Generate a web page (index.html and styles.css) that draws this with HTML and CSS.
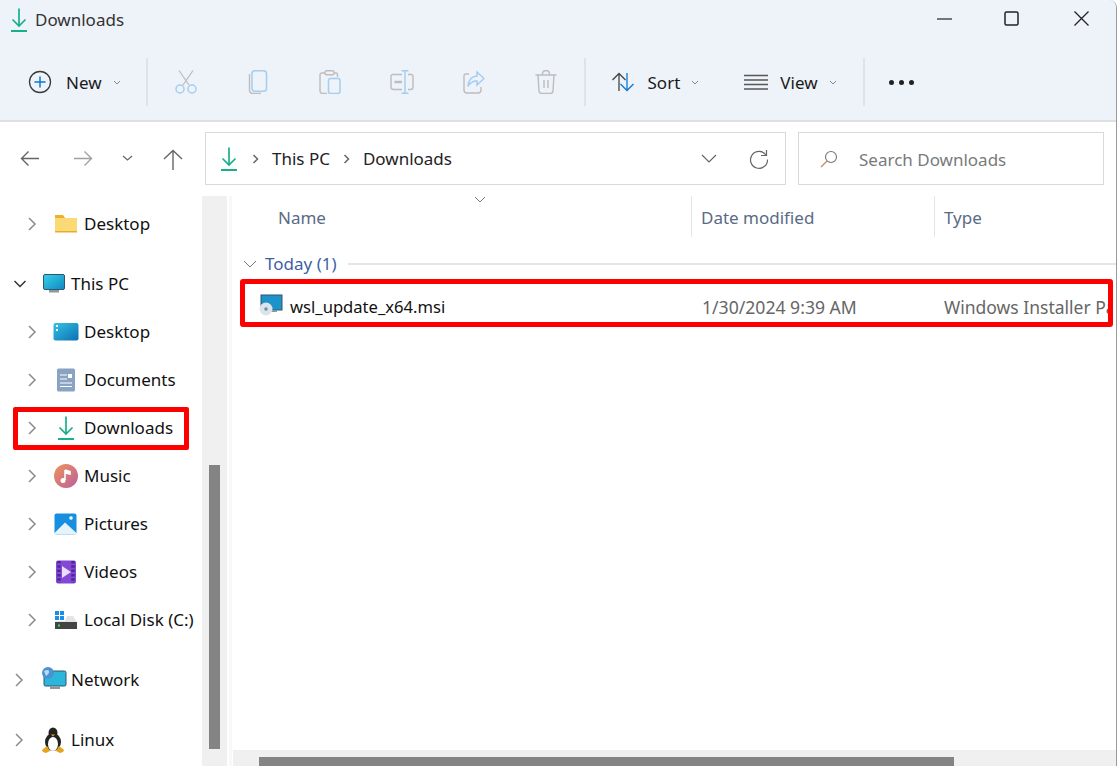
FILE: index.html
```html
<!DOCTYPE html>
<html lang="en">
<head>
<meta charset="utf-8">
<title>Downloads</title>
<link rel="stylesheet" href="styles.css">
</head>
<body>
<svg class="defs" width="0" height="0">
  <symbol id="dl" viewBox="0 0 16 24">
    <path d="M8 0.500V18M1.500 11.500L8 18L14.500 11.500" fill="none" stroke="#17b08c" stroke-width="1.700"/>
    <path d="M0 23H16" stroke="#17b08c" stroke-width="2"/>
  </symbol>
  <symbol id="chev-r" viewBox="0 0 10 16"><path d="M2 2L8 8L2 14" fill="none" stroke="#8c8c8c" stroke-width="1.5"/></symbol>
</svg>
<div class="window">
  <header class="top">
    <div class="titlebar">
      <div class="title"><svg class="ti-icon"><use href="#dl"/></svg><span>Downloads</span></div>
      <div class="winbtns">
        <svg class="w-min" width="15" height="15" viewBox="0 0 15 15"><path d="M0 8H15" stroke="#222" stroke-width="1.2"/></svg>
        <svg width="15" height="15" viewBox="0 0 15 15"><rect x="1" y="1" width="13" height="13" rx="1.500" fill="none" stroke="#222" stroke-width="1.500"/></svg>
        <svg width="15" height="15" viewBox="0 0 15 15"><path d="M0.500 0.500L14.500 14.500M14.500 0.500L0.500 14.500" stroke="#222" stroke-width="1.300"/></svg>
      </div>
    </div>
    <div class="toolbar">
      <div class="tool new">
        <svg width="24" height="24" viewBox="0 0 24 24"><circle cx="12" cy="12" r="10.500" fill="none" stroke="#3a3a3a" stroke-width="1.300"/><path d="M12 6.500V17.500M6.500 12H17.500" stroke="#0a78d4" stroke-width="1.500"/></svg>
        <span class="new-l">New</span>
        <svg class="caret" width="8" height="5" viewBox="0 0 8 5"><path d="M1 1L4 4L7 1" fill="none" stroke="#888" stroke-width="1"/></svg>
      </div>
      <i class="sep s1"></i>
      <div class="dim">
        <svg width="22" height="24" viewBox="0 0 22 24"><path d="M4 0.500L14 15M18 0.500L8 15" fill="none" stroke="#bdbdbd" stroke-width="1.300"/><circle cx="5" cy="19" r="4" fill="none" stroke="#a5cdf0" stroke-width="1.500"/><circle cx="17" cy="19" r="4" fill="none" stroke="#a5cdf0" stroke-width="1.500"/></svg>
        <svg width="20" height="24" viewBox="0 0 20 24"><path d="M1.500 4V20Q1.500 23.500 5 23.500H13" fill="none" stroke="#bdbdbd" stroke-width="1.400"/><rect x="4" y="0.800" width="14.500" height="20.500" rx="3" fill="none" stroke="#a5cdf0" stroke-width="1.500"/></svg>
        <svg width="22" height="24" viewBox="0 0 22 24"><path d="M6 3H3Q1 3 1 5V21Q1 23.500 4 23.500H8M15 3H17Q18.500 3 18.500 5V7" fill="none" stroke="#bdbdbd" stroke-width="1.400"/><rect x="6" y="0.800" width="9" height="4" rx="1.500" fill="none" stroke="#bdbdbd" stroke-width="1.400"/><rect x="9.500" y="8.500" width="11.500" height="15" rx="2" fill="none" stroke="#a5cdf0" stroke-width="1.500"/></svg>
        <svg width="24" height="24" viewBox="0 0 24 24"><path d="M12 4.500H3Q1 4.500 1 6.500V17Q1 19.500 3.500 19.500H12M18 4.500H21Q23 4.500 23 6.500V17Q23 19.500 20.500 19.500H18" fill="none" stroke="#bdbdbd" stroke-width="1.400"/><path d="M4.500 12H12" stroke="#bdbdbd" stroke-width="2.400"/><path d="M11.500 0.800H18.500M15 0.800V23.200M11.500 23.200H18.500" fill="none" stroke="#a5cdf0" stroke-width="1.400"/></svg>
        <svg width="22" height="24" viewBox="0 0 22 24"><path d="M6 4H3Q1 4 1 6V20Q1 23 4 23H15Q18 23 18 20V17" fill="none" stroke="#bdbdbd" stroke-width="1.400"/><path d="M14 2L21 8.500L14 15V11Q8 11 5 16.500Q5.500 6.500 14 6Z" fill="none" stroke="#a5cdf0" stroke-width="1.500"/></svg>
        <svg width="22" height="24" viewBox="0 0 22 24"><path d="M0.500 5H21.500M7.500 4.500Q7.500 0.800 10 0.800H12Q14.500 0.800 14.500 4.500M3 5L4 21Q4 23.500 7 23.500H15Q18 23.500 18 21L19 5M9 10V18M13 10V18" fill="none" stroke="#bdbdbd" stroke-width="1.400"/></svg>
      </div>
      <i class="sep s2"></i>
      <div class="tool sort">
        <svg width="24" height="20" viewBox="0 0 24 20"><path d="M8 19V2M1.500 8L8 1.500L14.500 8" fill="none" stroke="#444" stroke-width="1.300"/><path d="M16 1V18.500M9.500 12L16 18.500L22.500 12" fill="none" stroke="#0a78d4" stroke-width="1.300"/></svg>
        <span>Sort</span>
        <svg class="caret" width="8" height="5" viewBox="0 0 8 5"><path d="M1 1L4 4L7 1" fill="none" stroke="#888" stroke-width="1"/></svg>
      </div>
      <div class="tool view">
        <svg width="24" height="17" viewBox="0 0 24 17"><path d="M0 1.500H24M0 6H24M0 10.500H24M0 15H24" stroke="#555" stroke-width="1.300"/></svg>
        <span>View</span>
        <svg class="caret" width="8" height="5" viewBox="0 0 8 5"><path d="M1 1L4 4L7 1" fill="none" stroke="#888" stroke-width="1"/></svg>
      </div>
      <i class="sep s3"></i>
      <div class="more"><b></b><b></b><b></b></div>
    </div>
  </header>

  <div class="navrow">
    <div class="navbtns">
      <svg class="n-back" width="19" height="17" viewBox="0 0 19 17"><path d="M19 8.500H1.500M8.500 1.500L1.500 8.500L8.500 15.500" fill="none" stroke="#666" stroke-width="1.400"/></svg>
      <svg class="n-fwd" width="19" height="17" viewBox="0 0 19 17"><path d="M0 8.500H17.500M10.500 1.500L17.500 8.500L10.500 15.500" fill="none" stroke="#a0a0a0" stroke-width="1.400"/></svg>
      <svg class="n-down" width="11" height="6" viewBox="0 0 11 6"><path d="M1 1L5.500 5L10 1" fill="none" stroke="#666" stroke-width="1.200"/></svg>
      <svg class="n-up" width="20" height="21" viewBox="0 0 20 21"><path d="M10 21V1.500M1 10L10 1.500L19 10" fill="none" stroke="#666" stroke-width="1.400"/></svg>
    </div>
    <div class="address">
      <svg class="addr-icon"><use href="#dl"/></svg>
      <svg class="crumb-c" width="7" height="10" viewBox="0 0 7 10"><path d="M1.500 1L5.500 5L1.500 9" fill="none" stroke="#666" stroke-width="1.500"/></svg>
      <span>This PC</span>
      <svg class="crumb-c" width="7" height="10" viewBox="0 0 7 10"><path d="M1.500 1L5.500 5L1.500 9" fill="none" stroke="#666" stroke-width="1.500"/></svg>
      <span>Downloads</span>
      <svg class="addr-drop" width="16" height="10" viewBox="0 0 16 10"><path d="M1 1L8 8L15 1" fill="none" stroke="#666" stroke-width="1.200"/></svg>
      <svg class="addr-ref" width="20" height="20" viewBox="0 0 20 20"><path d="M17 6A8.500 8.500 0 1 0 18.500 10.500" fill="none" stroke="#666" stroke-width="1.200"/><path d="M17.500 1V6.500H12" fill="none" stroke="#666" stroke-width="1.200"/></svg>
    </div>
    <div class="search">
      <svg width="18" height="18" viewBox="0 0 18 18"><circle cx="11" cy="7" r="5.500" fill="none" stroke="#777" stroke-width="1.100"/><path d="M7 11L1 17" stroke="#c98a5e" stroke-width="1.200"/></svg>
      <span>Search Downloads</span>
    </div>
  </div>

  <div class="body">
    <nav class="side">
      <ul class="tree">
        <li class="row l2 r-first"><svg class="ch"><use href="#chev-r"/></svg>
          <svg class="ic" width="24" height="20" viewBox="0 0 24 20"><path d="M2 2H10L12 4H24V18H2Z" fill="#fbd975"/><path d="M2 1H10L12 4H2Z" fill="#eeb02c"/><path d="M2 17H24V18.500H2Z" fill="#e9ab2c"/></svg><span>Desktop</span></li>
        <li class="row l1 gap"><svg class="ch-d" width="14" height="8" viewBox="0 0 14 8"><path d="M1.500 1L7 6.500L12.500 1" fill="none" stroke="#333" stroke-width="1.500"/></svg>
          <svg class="ic pc" width="24" height="20" viewBox="0 0 24 20"><defs><linearGradient id="pcg" x1="0" y1="0" x2="1" y2="1"><stop offset="0" stop-color="#35d3e6"/><stop offset="1" stop-color="#1286c4"/></linearGradient></defs><rect x="2.500" y="0.500" width="21" height="15" rx="1.500" fill="url(#pcg)" stroke="#30566f"/><rect x="8" y="16" width="10" height="2.500" fill="#8b98a2"/></svg><span>This PC</span></li>
        <li class="row l2"><svg class="ch"><use href="#chev-r"/></svg>
          <svg class="ic" width="26" height="20" viewBox="0 0 26 20"><defs><linearGradient id="dk" x1="0" y1="0" x2="1" y2="1"><stop offset="0" stop-color="#34c3e3"/><stop offset="1" stop-color="#0b6fb4"/></linearGradient></defs><rect x="0.500" y="1" width="25" height="17.500" rx="2" fill="url(#dk)"/><rect x="3" y="3" width="2" height="2" fill="#fff"/><rect x="3" y="7" width="2" height="2" fill="#fff"/></svg><span>Desktop</span></li>
        <li class="row l2"><svg class="ch"><use href="#chev-r"/></svg>
          <svg class="ic" width="26" height="24" viewBox="0 0 26 24"><rect x="4" y="0.500" width="18" height="23" rx="1.500" fill="#8ba3c2"/><path d="M7 7H14M7 11H14M7 15H19M7 18.500H19" stroke="#fff" stroke-width="1.100"/><rect x="15" y="6" width="4" height="4" fill="#fff"/></svg><span>Documents</span></li>
        <li class="row l2"><svg class="ch"><use href="#chev-r"/></svg>
          <svg class="ic dl"><use href="#dl"/></svg><span>Downloads</span></li>
        <li class="row l2"><svg class="ch"><use href="#chev-r"/></svg>
          <svg class="ic" width="26" height="24" viewBox="0 0 26 24"><defs><linearGradient id="mu" x1="0" y1="0" x2="1" y2="1"><stop offset="0" stop-color="#f0935a"/><stop offset="1" stop-color="#b95f9e"/></linearGradient></defs><circle cx="13" cy="12" r="12" fill="url(#mu)"/><path d="M12 6V16M12 6L17 7.500V10L12 9" stroke="#fff" stroke-width="1.600" fill="#fff"/><circle cx="10" cy="16.500" r="2.500" fill="#fff"/></svg><span>Music</span></li>
        <li class="row l2"><svg class="ch"><use href="#chev-r"/></svg>
          <svg class="ic" width="26" height="22" viewBox="0 0 26 22"><rect x="1.500" y="0.500" width="22" height="21" rx="2" fill="#168fe0"/><path d="M1.500 20L12 9.500L23.500 20V20.500Q23.500 21.500 22 21.500H3Q1.500 21.500 1.500 20.500Z" fill="#e6f3fb"/><circle cx="18" cy="5" r="1.800" fill="#fff"/></svg><span>Pictures</span></li>
        <li class="row l2"><svg class="ch"><use href="#chev-r"/></svg>
          <svg class="ic" width="26" height="24" viewBox="0 0 26 24"><rect x="3" y="0.500" width="20" height="23" rx="2" fill="#8348d8"/><path d="M6 1V23M20 1V23" stroke="#4f2a8c" stroke-width="3.500" stroke-dasharray="2.500 1.800"/><path d="M9 6L18 12L9 18Z" fill="#e9ddfb"/></svg><span>Videos</span></li>
        <li class="row l2"><svg class="ch"><use href="#chev-r"/></svg>
          <svg class="ic" width="26" height="20" viewBox="0 0 26 20"><path d="M2 1H6V5H2ZM7 1H11V5H7ZM2 6H6V10H2ZM7 6H11V10H7Z" fill="#1a8fe3"/><path d="M14 6H20L24 12H2V11H12Z" fill="#e4e4e4"/><rect x="2" y="12" width="22" height="7" fill="#444"/><rect x="5" y="14.500" width="2" height="2" fill="#3fe04c"/></svg><span>Local Disk (C:)</span></li>
        <li class="row l1 gap2"><svg class="ch"><use href="#chev-r"/></svg>
          <svg class="ic net" width="26" height="26" viewBox="0 0 26 26"><rect x="3" y="4" width="22" height="15" rx="1.500" fill="#2cb6dc" stroke="#30566f"/><rect x="9" y="19.500" width="10" height="2.500" fill="#8b98a2"/><circle cx="7" cy="6" r="6" fill="#4a93cf"/><path d="M3 4Q7 2 8 4T5 9" fill="#b8dcf2"/></svg><span>Network</span></li>
        <li class="row l1 gap3"><svg class="ch"><use href="#chev-r"/></svg>
          <svg class="ic" width="24" height="26" viewBox="0 0 24 26"><ellipse cx="12" cy="15" rx="8" ry="9" fill="#222"/><ellipse cx="12" cy="6" rx="4.500" ry="5.500" fill="#222"/><ellipse cx="12" cy="17" rx="5" ry="7" fill="#fff"/><path d="M10 7.500H14L12 9.500Z" fill="#eea81c"/><path d="M1 23L6 19L9 24L5 26Q1 25 1 23ZM23 23L18 19L15 24L19 26Q23 25 23 23Z" fill="#e3a41c"/></svg><span>Linux</span></li>
      </ul>
      <div class="hl hl-side" aria-hidden="true"></div>
    </nav>
    <div class="vscroll"><i class="vthumb"></i></div>
    <main class="main">
      <div class="cols">
        <svg class="sortc" width="12" height="7" viewBox="0 0 12 7"><path d="M1 1L6 6L11 1" fill="none" stroke="#777" stroke-width="1"/></svg>
        <div class="col c-name">Name</div>
        <div class="col c-date">Date modified</div>
        <div class="col c-type">Type</div>
      </div>
      <div class="group">
        <svg width="14" height="8" viewBox="0 0 14 8"><path d="M1 1L7 7L13 1" fill="none" stroke="#777" stroke-width="1"/></svg>
        <span>Today (1)</span><i></i>
      </div>
      <div class="file">
        <svg class="msi" width="24" height="22" viewBox="0 0 24 22"><rect x="2" y="1" width="21" height="15" fill="#1d93c9" stroke="#33566d"/><rect x="10" y="16" width="8" height="2" fill="#8b98a2"/><circle cx="7" cy="15" r="6.500" fill="#dfe3e6"/><circle cx="7" cy="15" r="1.800" fill="#5d93c8"/></svg>
        <span class="f-name">wsl_update_x64.msi</span>
        <span class="f-date">1/30/2024 9:39 AM</span>
        <span class="f-type">Windows Installer Package</span>
      </div>
      <div class="hscroll"><i></i></div>
    </main>
  </div>
</div>
</body>
</html>
```
FILE: styles.css
```css
* { box-sizing: border-box; }
html, body { margin: 0; padding: 0; }
body { width: 1117px; height: 766px; overflow: hidden; background: #fff; font-family: "Noto Sans", "Open Sans", sans-serif; font-size: 17px; color: #1a1a1a; }
.defs { position: absolute; }
svg { display: block; flex: none; }
.window { width: 1117px; height: 766px; display: flex; flex-direction: column; border-right: 1px solid #9a9a9a; border-top-right-radius: 8px; overflow: hidden; }
.top { height: 122px; background: #eef2f9; border-bottom: 2px solid #dfdfdf; }
.titlebar { height: 40px; display: flex; justify-content: space-between; align-items: center; }
.title { display: flex; align-items: center; padding-left: 11px; gap: 8px; color: #333; }
.title span { margin-top: -2px; }
.ti-icon { width: 16px; height: 24px; }
.winbtns { display: flex; gap: 55px; padding-right: 27px; margin-top: -3px; }
.w-min { margin-right: -3px; }
.toolbar { height: 80px; display: flex; align-items: center; padding-top: 4px; }
.tool { display: flex; align-items: center; }
.new { padding-left: 28px; }
.new-l { margin-left: 14px; }
.caret { margin-left: 11px; }
.sep { width: 2px; height: 48px; background: #dfe2e6; }
.s1 { margin-left: 25px; }
.dim { display: grid; grid-template-columns: repeat(6, 72px); justify-items: center; align-items: center; padding-left: 2px; width: 436px; }
.s3 { margin-left: 26px; }
.sort { margin-left: 25px; }
.sort span { margin-left: 13px; }
.view { margin-left: 45px; }
.view span { margin-left: 12px; }
.more { display: flex; gap: 5px; margin-left: 24px; }
.more b { width: 5px; height: 5px; border-radius: 50%; background: #222; }

.navrow { height: 74px; display: flex; align-items: flex-start; padding-top: 10px; }
.navbtns { width: 205px; height: 52px; display: flex; align-items: center; padding-left: 20px; }
.n-fwd { margin-left: 35px; }
.n-down { margin-left: 29px; }
.n-up { margin-left: 30px; margin-top: 3px; }
.address { width: 581px; height: 53px; border: 1px solid #d9d9d9; display: flex; align-items: center; padding-left: 15px; color: #222; }
.addr-icon { width: 16px; height: 24px; }
.address .crumb-c { margin: 0 13px 0 15px; }
.address .crumb-c + span + .crumb-c { margin: 0 13px 0 13px; }
.addr-drop { margin-left: auto; }
.addr-ref { margin: 0 16px 0 32px; }
.search { width: 306px; height: 53px; border: 1px solid #d9d9d9; margin-left: 12px; display: flex; align-items: center; padding-left: 21px; gap: 21px; color: #7a7a7a; }
.search span { margin-top: 2px; }

.body { flex: 1; display: flex; min-height: 0; }
.side { width: 202px; position: relative; }
.tree { list-style: none; margin: 0; padding: 0; }
.row { height: 48px; display: flex; align-items: center; position: relative; white-space: nowrap; color: #111; }
.row span { margin-top: -2px; }
.r-first { margin-top: 4px; }
.gap { margin-top: 12px; }
.gap2 { margin-top: 12px; }
.gap3 { margin-top: 12px; }
.ch { width: 10px; height: 16px; }
.l2 { padding-left: 27px; }
.l1 { padding-left: 14px; }
.l2 .ic { position: absolute; left: 53px; top: 50%; transform: translateY(-50%); }
.l2 span { margin-left: 47px; }
.l1 .ic { position: absolute; left: 41px; top: 50%; transform: translateY(-50%); }
.l1 span { margin-left: 47px; }
.l1 .ch-d { margin-left: -1px; }
.l1 .ch-d + .ic + span { margin-left: 44px; }
.ic.dl { width: 16px; height: 24px; left: 58px; }
.hl { position: absolute; border: 5px solid #f00; pointer-events: none; border-radius: 2px; }
.hl-side { left: 13px; top: 211px; width: 176px; height: 43px; }
.vscroll { width: 25px; background: #f0f0f0; position: relative; margin-right: 2px; }
.vthumb { position: absolute; left: 7px; top: 269px; width: 11px; height: 284px; background: #848484; }
.main { flex: 1; position: relative; border-left: 3px solid #f8f8f8; overflow: hidden; }
.cols { height: 44px; position: relative; display: flex; color: #5a6a85; }
.col { height: 41px; display: flex; align-items: center; padding-top: 2px; }
.c-name { width: 460px; padding-left: 46px; border-right: 1px solid #e5e5e5; }
.c-date { width: 243px; padding-left: 9px; border-right: 1px solid #e5e5e5; }
.c-type { padding-left: 9px; }
.sortc { position: absolute; left: 242px; top: 0; }
.group { height: 39px; display: flex; align-items: center; padding: 9px 0 0 11px; color: #3f5fa5; }
.group span { margin-left: 8px; margin-top: -2px; }
.group i { flex: 1; height: 2px; background: #e5e5e5; margin-left: 11px; }
.file { height: 48px; margin: 0 3px 0 8px; border: 5px solid #f00; border-radius: 3px; display: flex; align-items: center; position: relative; white-space: nowrap; overflow: hidden; padding-top: 7px; }
.msi { position: absolute; left: 14px; top: 10px; }
.f-name { margin-left: 45px; color: #111; font-size: 16.6px; }
.f-date { position: absolute; left: 457px; color: #666; font-size: 17.6px; }
.f-type { position: absolute; left: 699px; color: #666; font-size: 17.5px; }
.hscroll { position: absolute; left: 1px; right: 0; bottom: 0; height: 16px; background: #f0f0f0; }
.hscroll i { position: absolute; left: 26px; width: 695px; top: 7px; height: 9px; background: #848484; }
```
